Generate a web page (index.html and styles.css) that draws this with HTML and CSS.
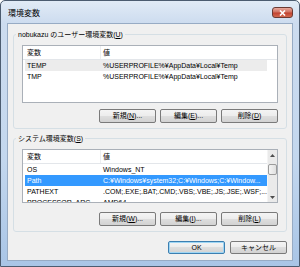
FILE: index.html
```html
<!DOCTYPE html>
<html lang="ja">
<head>
    <meta charset="UTF-8">
    <link rel="stylesheet" href="styles.css">
</head>
<body>
    <div class="window">
        <div class="titlebar">
            <span class="title">環境変数</span>
            <div class="close">
                <svg width="7" height="6" viewBox="0 0 7 6"><path d="M1 0.5 L6 5.5 M6 0.5 L1 5.5" stroke="#fff" stroke-width="1.6"/></svg>
            </div>
        </div>
        <div class="client">
            <fieldset class="group first">
                <legend>nobukazu のユーザー環境変数(<u>U</u>)</legend>
                <div class="list user-list">
                    <div class="list-body">
                        <div class="head">
                            <span class="c1">変数</span>
                            <span class="c2">値</span>
                        </div>
                        <div class="row inactive">
                            <span class="c1">TEMP</span>
                            <span class="c2">%USERPROFILE%¥AppData¥Local¥Temp</span>
                        </div>
                        <div class="row">
                            <span class="c1">TMP</span>
                            <span class="c2">%USERPROFILE%¥AppData¥Local¥Temp</span>
                        </div>
                    </div>
                </div>
                <div class="buttons">
                    <button class="btn">新規(<u>N</u>)...</button>
                    <button class="btn">編集(<u>E</u>)...</button>
                    <button class="btn">削除(<u>D</u>)</button>
                </div>
            </fieldset>

            <fieldset class="group second">
                <legend>システム環境変数(<u>S</u>)</legend>
                <div class="list system-list">
                    <div class="list-body">
                        <div class="head">
                            <span class="c1">変数</span>
                            <span class="c2">値</span>
                        </div>
                        <div class="row">
                            <span class="c1">OS</span>
                            <span class="c2">Windows_NT</span>
                        </div>
                        <div class="row selected">
                            <span class="c1">Path</span>
                            <span class="c2">C:¥Windows¥system32;C:¥Windows;C:¥Window...</span>
                        </div>
                        <div class="row">
                            <span class="c1">PATHEXT</span>
                            <span class="c2">.COM;.EXE;.BAT;.CMD;.VBS;.VBE;.JS;.JSE;.WSF;...</span>
                        </div>
                        <div class="row">
                            <span class="c1">PROCESSOR_ARC...</span>
                            <span class="c2">AMD64</span>
                        </div>
                    </div>
                    <div class="scrollbar">
                        <div class="arrow">
                            <svg width="5" height="3" viewBox="0 0 5 3"><path d="M0 3 L2.5 0 L5 3 Z" fill="#4d4d4d"/></svg>
                        </div>
                        <div class="thumb"></div>
                        <div class="arrow bottom">
                            <svg width="5" height="3" viewBox="0 0 5 3"><path d="M0 0 L2.5 3 L5 0 Z" fill="#4d4d4d"/></svg>
                        </div>
                    </div>
                </div>
                <div class="buttons">
                    <button class="btn">新規(<u>W</u>)...</button>
                    <button class="btn">編集(<u>I</u>)...</button>
                    <button class="btn">削除(<u>L</u>)</button>
                </div>
            </fieldset>

            <div class="dialog-buttons">
                <button class="btn default">OK</button>
                <button class="btn">キャンセル</button>
            </div>
        </div>
    </div>
</body>
</html>
```

FILE: styles.css
```css
* {
    box-sizing: border-box;
}

body {
    margin: 0;
    font-family: "Liberation Sans", "Noto Sans CJK JP", sans-serif;
    font-size: 7px;
    color: #000;
}

.window {
    width: 300px;
    height: 267px;
    border: 1px solid #4c5c70;
    border-radius: 5px 5px 0 0;
    background: linear-gradient(#e1ebf6, #cddcef 22px, #c3d7ee 60%, #a9c5e6);
    display: flex;
    flex-direction: column;
    overflow: hidden;
}

.titlebar {
    height: 22px;
    display: flex;
    align-items: center;
    justify-content: space-between;
    padding-left: 7px;
}

.title {
    font-size: 8px;
}

.close {
    align-self: flex-start;
    margin-top: 6px;
    margin-right: 6px;
    width: 21px;
    height: 11px;
    border: 1px solid #6b3a33;
    border-radius: 3px;
    background: linear-gradient(#e8a99d, #d0705f 45%, #c2422f 55%, #d26a50);
    display: flex;
    align-items: center;
    justify-content: center;
}

.client {
    flex: 1;
    margin: 0 6px 5px;
    border: 1px solid #97abc4;
    background: #f0f0f0;
    padding: 0 5px;
    display: flex;
    flex-direction: column;
}

.group {
    margin: 5px 0 0;
    padding: 0 8px 5px;
    border: 1px solid #d5dfe5;
    border-radius: 3px;
    min-width: 0;
}

.group.second {
    margin-top: 4px;
}

.group legend {
    margin-left: -6px;
    padding: 0 2px;
    line-height: 11px;
}

.list {
    margin-top: 5px;
    height: 58px;
    border: 1px solid #aab0b8;
    background: #fff;
    display: flex;
    overflow: hidden;
}

.system-list {
    height: 54px;
}

.list-body {
    flex: 1;
    min-width: 0;
}

.head {
    height: 14px;
    line-height: 13px;
    border-bottom: 1px solid #e3e6ea;
    display: flex;
    padding-left: 2px;
}

.row {
    height: 11px;
    line-height: 11px;
    margin-left: 2px;
    width: 242px;
    display: flex;
}

.c1 {
    width: 76px;
    padding-left: 2px;
    white-space: nowrap;
    overflow: hidden;
}

.c2 {
    width: 166px;
    padding-left: 2px;
    white-space: nowrap;
    overflow: hidden;
}

.head .c1 {
    border-right: 1px solid #eceef0;
}

.row.inactive {
    background: #ececec;
}

.row.selected {
    background: #3399ff;
    color: #fff;
}

.scrollbar {
    width: 10px;
    background: #eaeaea;
    border-left: 1px solid #f4f4f4;
    display: flex;
    flex-direction: column;
}

.arrow {
    height: 10px;
    display: flex;
    align-items: center;
    justify-content: center;
}

.arrow.bottom {
    margin-top: auto;
}

.thumb {
    margin: 4px 0 0;
    height: 11px;
    border: 1px solid #9b9b9b;
    border-radius: 2px;
    background: linear-gradient(to right, #f4f4f4, #e0e0e0);
}

.buttons {
    margin-top: 6px;
    display: flex;
    justify-content: flex-end;
    gap: 4px;
}

.second .buttons {
    margin-top: 9px;
}

.btn {
    width: 57px;
    height: 14px;
    padding: 0;
    border: 1px solid #7a7a7a;
    border-radius: 2px;
    background: linear-gradient(#f4f4f4, #ececec 50%, #dedede 50%, #d2d2d2);
    font-family: "Liberation Sans", "Noto Sans CJK JP", sans-serif;
    font-size: 7px;
    line-height: 12px;
    color: #000;
    text-align: center;
}

.dialog-buttons {
    margin-top: 9px;
    display: flex;
    justify-content: flex-end;
    gap: 5px;
}

.dialog-buttons .btn {
    height: 13px;
    line-height: 11px;
}

.btn.default {
    border-color: #3c7fb1;
    box-shadow: inset 0 0 0 1px #9fd6f4;
}
```
